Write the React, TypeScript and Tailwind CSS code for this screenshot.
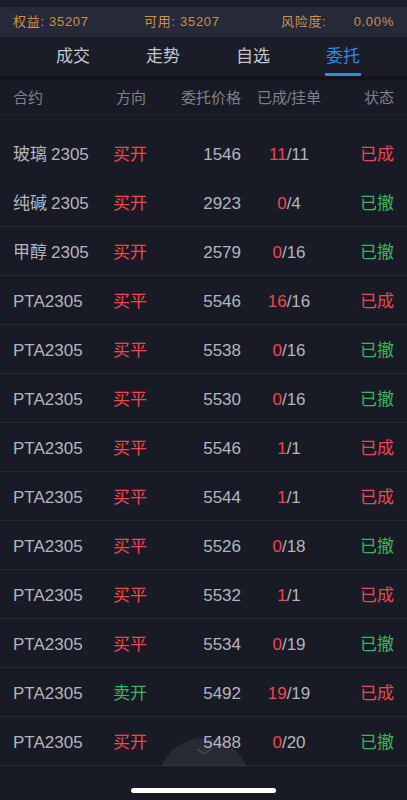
import React from "react";

type Row = { cn: string; code: string; dir: string; dirColor: "red" | "green"; price: string; done: string; total: string; status: "已成" | "已撤" };

const rows: Row[] = [
  { cn: "玻璃", code: "2305", dir: "买开", dirColor: "red", price: "1546", done: "11", total: "11", status: "已成" },
  { cn: "纯碱", code: "2305", dir: "买开", dirColor: "red", price: "2923", done: "0", total: "4", status: "已撤" },
  { cn: "甲醇", code: "2305", dir: "买开", dirColor: "red", price: "2579", done: "0", total: "16", status: "已撤" },
  { cn: "", code: "PTA2305", dir: "买平", dirColor: "red", price: "5546", done: "16", total: "16", status: "已成" },
  { cn: "", code: "PTA2305", dir: "买平", dirColor: "red", price: "5538", done: "0", total: "16", status: "已撤" },
  { cn: "", code: "PTA2305", dir: "买平", dirColor: "red", price: "5530", done: "0", total: "16", status: "已撤" },
  { cn: "", code: "PTA2305", dir: "买平", dirColor: "red", price: "5546", done: "1", total: "1", status: "已成" },
  { cn: "", code: "PTA2305", dir: "买平", dirColor: "red", price: "5544", done: "1", total: "1", status: "已成" },
  { cn: "", code: "PTA2305", dir: "买平", dirColor: "red", price: "5526", done: "0", total: "18", status: "已撤" },
  { cn: "", code: "PTA2305", dir: "买平", dirColor: "red", price: "5532", done: "1", total: "1", status: "已成" },
  { cn: "", code: "PTA2305", dir: "买平", dirColor: "red", price: "5534", done: "0", total: "19", status: "已撤" },
  { cn: "", code: "PTA2305", dir: "卖开", dirColor: "green", price: "5492", done: "19", total: "19", status: "已成" },
  { cn: "", code: "PTA2305", dir: "买开", dirColor: "red", price: "5488", done: "0", total: "20", status: "已撤" },
];

const font = { fontFamily: '"Liberation Sans", "Noto Sans CJK SC", sans-serif' };

export default function App() {
  return (
    <div className="relative w-[407px] h-[800px] overflow-hidden bg-[#181b26] flex flex-col" style={font}>
      <div className="h-[7px] bg-[#1a1c28]" />
      <div className="h-[30px] bg-[#262938] flex items-center px-[13px] text-[13px] text-[#c8924d] tracking-[0.7px]">
        <div className="w-[131px]">权益:&nbsp;35207</div>
        <div className="w-[137px]">可用:&nbsp;35207</div>
        <div className="flex-1 flex justify-between">
          <span>风险度:</span>
          <span>0.00%</span>
        </div>
      </div>
      <div className="h-[39px] bg-[#1a1d28] flex pl-[28px]">
        {["成交", "走势", "自选", "委托"].map((t, i) => (
          <div key={t} className="w-[90px] flex flex-col items-center">
            <div className={`flex-1 flex items-center pt-[3px] text-[17px] ${i === 3 ? "text-[#2f86e6]" : "text-[#c3c5cb]"}`}>{t}</div>
            <div className={`h-[3px] w-[36px] ${i === 3 ? "bg-[#2f86e6]" : "bg-transparent"}`} />
          </div>
        ))}
      </div>
      <div className="h-[4px] bg-[#12141b]" />
      <div className="h-[35px] flex items-center pt-[2px] px-[13px] text-[15px] text-[#7e818b] border-b border-[#1e2130]">
        <div className="w-[100px]">合约</div>
        <div className="w-[65px] pl-[3px]">方向</div>
        <div className="w-[63px] text-right">委托价格</div>
        <div className="w-[96px] text-center">已成/挂单</div>
        <div className="flex-1 text-right">状态</div>
      </div>
      <div className="pt-[14px] flex flex-col">
        {rows.map((r, i) => (
          <div
            key={i}
            className={`h-[49px] flex items-center pt-[4px] px-[13px] text-[17px] border-b ${i === 0 ? "border-transparent" : "border-[#232634]"}`}
          >
            <div className="w-[100px] text-[#b3b5bc]">
              {r.cn && <span className="mr-[4px]">{r.cn}</span>}
              <span>{r.code}</span>
            </div>
            <div className={`w-[65px] ${r.dirColor === "red" ? "text-[#f0464e]" : "text-[#3cb55a]"}`}>{r.dir}</div>
            <div className="w-[63px] text-right text-[#b3b5bc]">{r.price}</div>
            <div className="w-[96px] text-center">
              <span className="text-[#f0464e]">{r.done}</span>
              <span className="text-[#b3b5bc]">/{r.total}</span>
            </div>
            <div className={`flex-1 text-right ${r.status === "已成" ? "text-[#f0464e]" : "text-[#3cb55a]"}`}>{r.status}</div>
          </div>
        ))}
      </div>
      <div className="absolute left-[158px] top-[738px] w-[92px] h-[28px] overflow-hidden pointer-events-none">
        <div className="w-[92px] h-[92px] rounded-full bg-white/[0.07]" />
        <svg className="absolute left-[38px] top-[10px]" width="16" height="8" viewBox="0 0 16 8" fill="none">
          <path d="M1 1 L8 6 L15 1" stroke="#4a4d57" strokeWidth="1.3" />
        </svg>
      </div>
      <div className="absolute left-[131px] top-[788px] w-[145px] h-[5px] rounded-full bg-white" />
    </div>
  );
}
